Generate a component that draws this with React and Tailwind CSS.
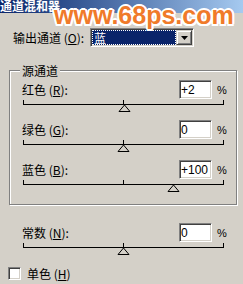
import React from "react";

const cjk = { fontFamily: '"Noto Sans CJK SC", "Liberation Sans", sans-serif' };

function Sunken({ className = "", children }) {
    return (
        <div className={`border border-t-[#808080] border-l-[#808080] border-b-white border-r-white shadow-[inset_1px_1px_0_#404040,inset_-1px_-1px_0_#d4d0c8] ${className}`}>
            {children}
        </div>
    );
}

function Slider({ value }) {
    const cx = 100.5 + (value / 200) * 100;
    return (
        <svg width="201" height="12" className="block">
            <line x1="0" y1="4.5" x2="201" y2="4.5" stroke="#000" />
            <line x1="0.5" y1="0" x2="0.5" y2="5" stroke="#000" />
            <line x1="100.5" y1="0" x2="100.5" y2="5" stroke="#000" />
            <line x1="200.5" y1="0" x2="200.5" y2="5" stroke="#000" />
            <polygon points={`${cx},5 ${cx - 5.5},11.5 ${cx + 5.5},11.5`} fill="#d4d0c8" stroke="#000" />
        </svg>
    );
}

function ChannelRow({ name, keyChar, value, pos }) {
    return (
        <div className="h-[40px]">
            <div className="flex items-center h-[19px] pl-[12px] pr-[11px]">
                <div className="flex-1 text-[12px] leading-[12px] text-black" style={cjk}>
                    {name} (<u>{keyChar}</u>):
                </div>
                <Sunken className="w-[33px] h-[19px] bg-white flex items-center pl-[1px]">
                    <span className="text-[12px] leading-[12px] text-black font-['Liberation_Sans',sans-serif]">{value}</span>
                </Sunken>
                <div className="ml-[5px] w-[8px] text-[11px] leading-[12px] text-black font-['Liberation_Sans',sans-serif]">%</div>
            </div>
            <div className="ml-[13px] mt-[1px]">
                <Slider value={pos} />
            </div>
        </div>
    );
}

export default function App() {
    return (
        <div className="relative w-[243px] h-[284px] overflow-hidden bg-[#d4d0c8]">
            {/* title bar */}
            <div className="h-[13px] bg-gradient-to-r from-[#0a246a] to-[#a6caf0] overflow-hidden">
                <div className="-mt-[1px] text-[12px] leading-[14px] font-bold text-white" style={cjk}>通道混和器</div>
            </div>

            {/* output channel */}
            <div className="mt-[15px] flex items-center pl-[13px] h-[19px]">
                <div className="w-[77px] text-[12px] leading-[12px] text-black" style={cjk}>
                    输出通道 (<u>O</u>):
                </div>
                <Sunken className="w-[104px] h-[19px] bg-white flex items-center p-[1px]">
                    <div className="flex-1 h-full bg-[#0a246a] outline outline-1 outline-dotted outline-white -outline-offset-1 flex items-center pl-[2px]">
                        <span className="text-[12px] leading-[12px] text-white" style={cjk}>蓝</span>
                    </div>
                    <div className="w-[16px] h-full border border-t-[#d4d0c8] border-l-[#d4d0c8] border-b-[#404040] border-r-[#404040] shadow-[inset_1px_1px_0_white,inset_-1px_-1px_0_#808080] bg-[#d4d0c8] flex items-center justify-center">
                        <svg width="7" height="4">
                            <polygon points="0,0 7,0 3.5,4" fill="#000" />
                        </svg>
                    </div>
                </Sunken>
            </div>

            {/* source channels group */}
            <div className="mt-[23px] ml-[9px] w-[228px] h-[135px] border border-[#808080] shadow-[inset_1px_1px_0_white,1px_1px_0_white]">
                <div className="-mt-[7px] ml-[10px] w-fit px-[2px] bg-[#d4d0c8] text-[12px] leading-[13px] text-black" style={cjk}>源通道</div>
                <div className="mt-[3px]">
                    <ChannelRow name="红色" keyChar="R" value="+2" pos={2} />
                    <ChannelRow name="绿色" keyChar="G" value="0" pos={0} />
                    <ChannelRow name="蓝色" keyChar="B" value="+100" pos={100} />
                </div>
            </div>

            {/* constant */}
            <div className="mt-[18px] ml-[10px] w-[226px]">
                <ChannelRow name="常数" keyChar="N" value="0" pos={0} />
            </div>

            {/* monochrome */}
            <div className="mt-[4px] ml-[8px] flex items-center">
                <Sunken className="w-[13px] h-[13px] bg-white" />
                <div className="ml-[6px] text-[12px] leading-[12px] text-black" style={cjk}>
                    单色 (<u>H</u>)
                </div>
            </div>

            {/* watermark */}
            <div className="absolute top-[0px] left-[54px] text-[25px] leading-[30px] font-bold text-[#f07a2a] font-['Liberation_Sans',sans-serif] [text-shadow:2px_0_0_#fff,-2px_0_0_#fff,0_2px_0_#fff,0_-2px_0_#fff,1.5px_1.5px_0_#fff,-1.5px_-1.5px_0_#fff,1.5px_-1.5px_0_#fff,-1.5px_1.5px_0_#fff]">
                www.68ps.com
            </div>
        </div>
    );
}
